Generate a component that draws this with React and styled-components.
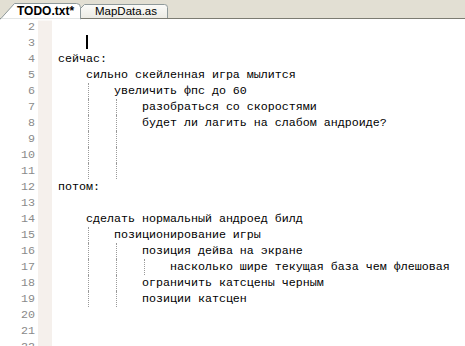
import React from 'react'
import styled, { createGlobalStyle } from 'styled-components'

const GlobalStyle = createGlobalStyle`
  html, body {
    margin: 0;
    padding: 0;
    background: #ffffff;
    overflow: hidden;
  }
`

const lines = [
  { n: 2, text: '', guides: 0 },
  { n: 3, text: '    ', guides: 0, cursor: true },
  { n: 4, text: 'сейчас:', guides: 0 },
  { n: 5, text: '    сильно скейленная игра мылится', guides: 0 },
  { n: 6, text: '        увеличить фпс до 60', guides: 1 },
  { n: 7, text: '            разобраться со скоростями', guides: 2 },
  { n: 8, text: '            будет ли лагить на слабом андроиде?', guides: 2 },
  { n: 9, text: '', guides: 2 },
  { n: 10, text: '', guides: 2 },
  { n: 11, text: '', guides: 2 },
  { n: 12, text: 'потом:', guides: 0 },
  { n: 13, text: '', guides: 0 },
  { n: 14, text: '    сделать нормальный андроед билд', guides: 0 },
  { n: 15, text: '        позиционирование игры', guides: 1 },
  { n: 16, text: '            позиция дейва на экране', guides: 2 },
  { n: 17, text: '                насколько шире текущая база чем флешовая', guides: 3 },
  { n: 18, text: '            ограничить катсцены черным', guides: 2 },
  { n: 19, text: '            позиции катсцен', guides: 2 },
  { n: 20, text: '', guides: 0 },
  { n: 21, text: '', guides: 0 },
  { n: 22, text: '', guides: 0 },
]

// one indent level = 4 chars of 7px
const INDENT = 28

const Window = styled.div`
  width: 465px;
  height: 346px;
  display: flex;
  flex-direction: column;
  overflow: hidden;
  background: #ffffff;
`

const TabBar = styled.div`
  height: 19px;
  box-sizing: border-box;
  padding-top: 3px;
  display: flex;
  align-items: flex-end;
  background: #e2dfd3;
  border-bottom: 1px solid #7c7c72;
  flex-shrink: 0;
`

const Tab = styled.div`
  position: relative;
  width: ${p => p.width}px;
  height: ${p => (p.active ? 16 : 14)}px;
  margin-bottom: ${p => (p.active ? -1 : 0)}px;
  z-index: ${p => (p.active ? 2 : 1)};
  display: flex;
  align-items: center;
  padding-left: ${p => p.pad}px;
  box-sizing: border-box;
  font-family: "Liberation Sans", Arial, sans-serif;
  font-size: ${p => (p.active ? 12 : 11.5)}px;
  font-weight: ${p => (p.active ? 700 : 400)};
  color: #000000;
`

const TabShape = styled.svg`
  position: absolute;
  left: 0;
  top: 0;
  z-index: -1;
  overflow: visible;
`

const TabLabel = styled.span`
  position: relative;
  line-height: 14px;
  margin-top: ${p => (p.active ? -1 : 0)}px;
`

const Editor = styled.div`
  flex: 1;
  display: flex;
  overflow: hidden;
`

const Gutter = styled.div`
  width: 38px;
  flex-shrink: 0;
  box-sizing: border-box;
  padding-right: 3px;
  text-align: right;
  font-family: "Liberation Mono", "Courier New", monospace;
  font-size: 11.67px;
  line-height: 16px;
  color: #8a8a8a;
`

const Margin = styled.div`
  width: 14px;
  flex-shrink: 0;
  background: #f5f0ec;
`

const Code = styled.div`
  flex: 1;
  padding-left: 6px;
  font-family: "Liberation Mono", "Courier New", monospace;
  font-size: 11.67px;
  line-height: 16px;
  color: #000000;
`

const Line = styled.div`
  position: relative;
  height: 16px;
  white-space: pre;
`

const Guide = styled.span`
  position: absolute;
  top: 0;
  bottom: 0;
  width: 0;
  border-left: 1px dotted #9a9a9a;
`

const Caret = styled.span`
  display: inline-block;
  width: 2px;
  height: 14px;
  vertical-align: -3px;
  background: #000000;
`

const App = () => {
  return (
    <Window>
      <GlobalStyle />
      <TabBar>
        <Tab active width={81} pad={17}>
          <TabShape width="81" height="16">
            <path d="M0.5 16 L14.5 0.5 L76.5 0.5 Q80.5 0.5 80.5 4.5 L80.5 16 Z" fill="#ffffff" stroke="#8f999a" />
            <path d="M1 16.5 L80 16.5" stroke="#ffffff" strokeWidth="2" />
          </TabShape>
          <TabLabel active>TODO.txt*</TabLabel>
        </Tab>
        <Tab width={87} pad={14}>
          <TabShape width="87" height="14">
            <defs>
              <linearGradient id="inact" x1="0" y1="0" x2="0" y2="1">
                <stop offset="0" stopColor="#fbfbf9" />
                <stop offset="1" stopColor="#ecebe4" />
              </linearGradient>
            </defs>
            <path d="M-10 14 L3.5 0.5 L83.5 0.5 Q86.5 0.5 86.5 3.5 L86.5 14" fill="url(#inact)" stroke="#8f999a" />
          </TabShape>
          <TabLabel>MapData.as</TabLabel>
        </Tab>
      </TabBar>
      <Editor>
        <Gutter>
          {lines.map(l => (
            <div key={l.n}>{l.n}</div>
          ))}
        </Gutter>
        <Margin />
        <Code>
          {lines.map(l => (
            <Line key={l.n}>
              {Array.from({ length: l.guides }).map((_, k) => (
                <Guide key={k} style={{ left: (k + 1) * INDENT + 2 }} />
              ))}
              {l.text}
              {l.cursor && <Caret />}
            </Line>
          ))}
        </Code>
      </Editor>
    </Window>
  )
}

export default App
